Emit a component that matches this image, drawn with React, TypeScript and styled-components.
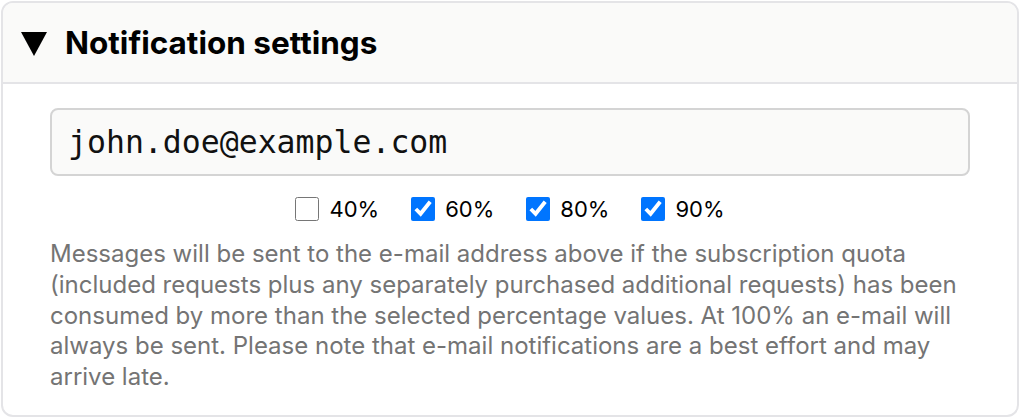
import React, { useState } from 'react';
import styled, { createGlobalStyle } from 'styled-components';

const GlobalStyle = createGlobalStyle`
	html, body {
		margin: 0;
		padding: 0;
		background: #ffffff;
	}
	body {
		padding: 1px;
		font-family: Inter, "Noto Sans", sans-serif;
	}
`

const Panel = styled.details`
	box-sizing: border-box;
	width: 1018px;
	height: 416px;
	border: 2px solid #e4e4e7;
	border-radius: 12px;
	overflow: hidden;
	background: #ffffff;
`

const Summary = styled.summary`
	display: flex;
	align-items: center;
	gap: 18px;
	height: 79px;
	padding: 0 18px;
	background: #fafaf9;
	border-bottom: 2px solid #e4e4e7;
	cursor: pointer;
	list-style: none;
	font-size: 31.5px;
	font-weight: 700;
	color: #000000;
	&::-webkit-details-marker {
		display: none;
	}
`

const Arrow = styled.span`
	display: inline-block;
	width: 0;
	height: 0;
	border-left: 13px solid transparent;
	border-right: 13px solid transparent;
	border-top: 24px solid #000000;
	margin-top: 2px;
`

const Body = styled.div`
	display: flex;
	flex-direction: column;
	padding: 24px 47px 0 47px;
`

const EmailInput = styled.input`
	box-sizing: border-box;
	width: 100%;
	height: 68px;
	padding: 0 16px;
	border: 2px solid #d4d4d4;
	border-radius: 8px;
	background: #fafaf9;
	font-family: "DejaVu Sans Mono", "Liberation Mono", monospace;
	font-size: 31.5px;
	color: #111111;
	outline: none;
`

const Thresholds = styled.div`
	display: flex;
	justify-content: center;
	gap: 32px;
	margin-top: 20px;
`

const Option = styled.label`
	display: flex;
	align-items: center;
	gap: 10px;
	font-size: 22px;
	color: #000000;
	cursor: pointer;
`

const Box = styled.input`
	width: 24px;
	height: 24px;
	margin: 0;
	accent-color: #0075ff;
`

const Note = styled.p`
	margin: 17px -30px 0 0;
	font-size: 24px;
	line-height: 30.75px;
	color: #747474;
`

const App = () => {
	const [email, setEmail] = useState('john.doe@example.com');
	const [levels, setLevels] = useState<Record<number, boolean>>({ 40: false, 60: true, 80: true, 90: true });
	const toggle = (v: number) => setLevels({ ...levels, [v]: !levels[v] });

	return (
		<>
			<GlobalStyle />
			<Panel open>
				<Summary>
					<Arrow />
					Notification settings
				</Summary>
				<Body>
					<EmailInput value={email} onChange={(e) => setEmail(e.target.value)} />
					<Thresholds>
						{[40, 60, 80, 90].map((v) => (
							<Option key={v}>
								<Box type="checkbox" checked={levels[v]} onChange={() => toggle(v)} />
								{v}%
							</Option>
						))}
					</Thresholds>
					<Note>
						Messages will be sent to the e-mail address above if the subscription quota (included requests plus
						any separately purchased additional requests) has been consumed by more than the selected percentage
						values. At 100% an e-mail will always be sent. Please note that e-mail notifications are a best effort
						and may arrive late.
					</Note>
				</Body>
			</Panel>
		</>
	)
}

export default App
